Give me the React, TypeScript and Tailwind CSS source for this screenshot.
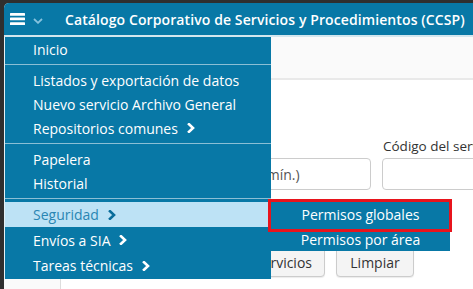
import type { ReactNode } from "react";

function Chevron({ className }: { className?: string }) {
  return (
    <svg viewBox="0 0 8 10" className={`h-[10px] w-[8px] ${className ?? ""}`} fill="none">
      <polyline points="2,1.2 6,5 2,8.8" stroke="currentColor" strokeWidth="2.6" strokeLinecap="square" />
    </svg>
  );
}

function Item({ children, sub, active, h = "h-6" }: { children: ReactNode; sub?: boolean; active?: boolean; h?: string }) {
  return (
    <div
      className={`flex items-center pl-[28px] ${h} ${
        active ? "bg-[#bde2f5] text-[#2a86b3]" : "text-white"
      }`}
    >
      <span>{children}</span>
      {sub && <Chevron className={`ml-[9px] ${active ? "text-[#0a6d9b]" : "text-white"}`} />}
    </div>
  );
}

function Sep() {
  return <div className="h-px bg-[#8bbfd5]" />;
}

export default function App() {
  return (
    <div className="h-[289px] w-[473px] overflow-hidden bg-[#2f2f2f] pl-1 pt-[3px] font-['Open_Sans',sans-serif]">
      <div className="relative h-full overflow-hidden rounded-tl-[5px] bg-white">
        <header className="flex h-8 items-center bg-[#0878a6] pl-[6px] text-white">
          <svg viewBox="0 0 15 12" className="h-[12px] w-[15px]">
            <rect x="0" y="0" width="15" height="2.7" rx="0.5" fill="white" />
            <rect x="0" y="4.6" width="15" height="2.7" rx="0.5" fill="white" />
            <rect x="0" y="9.2" width="15" height="2.7" rx="0.5" fill="white" />
          </svg>
          <svg viewBox="0 0 10 6" className="ml-[8px] mt-[3px] h-[6px] w-[10px]" fill="none">
            <polyline points="1,1 5,4.8 9,1" stroke="#86c2de" strokeWidth="1.8" />
          </svg>
          <h1 className="ml-[22px] text-[14px] font-semibold tracking-[0.1px]">
            Catálogo Corporativo de Servicios y Procedimientos (CCSP)
          </h1>
        </header>
        <div className="h-[2px] bg-[#d3e6ee]" />
        <div className="h-[43px] border-b-2 border-[#e9e9e9] bg-[#fafafa]" />

        <div className="flex h-full">
          <div className="w-[56px] shrink-0 bg-[#fafafa]" />
          <div className="min-w-0 flex-1 border-l border-[#dddddd] pl-[15px] pt-[56px] text-[#333]">
            <div className="grid grid-cols-[295px_1fr] gap-x-[11px]">
              <div className="h-[22px]" />
              <label className="h-[22px] whitespace-nowrap pl-px text-[13.5px] leading-5">Código del servicio</label>
              <input
                className="h-8 min-w-0 rounded-[4px] border border-[#cccccc] bg-white px-3 text-[14px] placeholder:text-[#555]"
                placeholder="Nombre del servicio (3 car. mín.)"
              />
              <input className="h-8 w-[140px] rounded-[4px] border border-[#cccccc] bg-white px-3 text-[14px]" />
            </div>
            <div className="mt-[57px] flex w-[338px] justify-end gap-[11px]">
              <button className="h-[30px] rounded-[4px] border border-[#cccccc] bg-[#f4f4f4] px-3 text-[14px] text-[#333] shadow-[0_1px_1px_rgba(0,0,0,0.08)]">
                Buscar servicios
              </button>
              <button className="h-[30px] w-[78px] rounded-[4px] border border-[#cccccc] bg-[#f4f4f4] text-[14px] text-[#333] shadow-[0_1px_1px_rgba(0,0,0,0.08)]">
                Limpiar
              </button>
            </div>
          </div>
        </div>

        <nav className="absolute left-0 top-[34px] w-[267px] border-l border-[#e4f1f6] bg-[#0878a6] pb-px text-[14px]">
          <Item>Inicio</Item>
          <div className="h-[3px]" />
          <Sep />
          <div className="py-[3px]">
            <Item>Listados y exportación de datos</Item>
            <Item>Nuevo servicio Archivo General</Item>
            <Item sub>Repositorios comunes</Item>
          </div>
          <Sep />
          <div className="py-[3px]">
            <Item>Papelera</Item>
            <Item>Historial</Item>
          </div>
          <Sep />
          <div className="pt-[3px]">
            <Item sub active h="h-[25px]">Seguridad</Item>
            <Item sub h="h-[26px]">Envíos a SIA</Item>
            <Item sub h="h-[25px]">Tareas técnicas</Item>
          </div>
        </nav>

        <div className="absolute left-[267px] top-[199px] w-[179px] bg-[#0878a6] text-center text-[14px] text-white">
          <div className="flex h-[25px] items-center justify-center">Permisos globales</div>
          <div className="flex h-[24px] items-center justify-center">Permisos por área</div>
        </div>
        <div className="absolute left-[264px] top-[196px] h-[33px] w-[184px] border-[3px] border-[#e8141c]" />
      </div>
    </div>
  );
}
